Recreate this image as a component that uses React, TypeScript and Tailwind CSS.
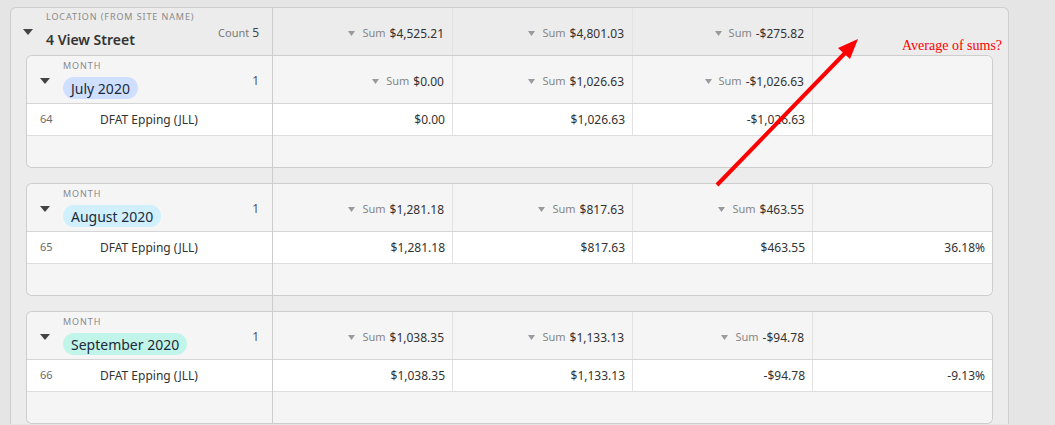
import React from 'react';

type Group = {
  month: string;
  pill: string;
  sums: [string, string, string];
  row: { id: string; name: string; values: [string, string, string, string] };
};

const groups: Group[] = [
  {
    month: 'July 2020',
    pill: 'bg-[#cfdfff]',
    sums: ['$0.00', '$1,026.63', '-$1,026.63'],
    row: { id: '64', name: 'DFAT Epping (JLL)', values: ['$0.00', '$1,026.63', '-$1,026.63', ''] },
  },
  {
    month: 'August 2020',
    pill: 'bg-[#d0f0fd]',
    sums: ['$1,281.18', '$817.63', '$463.55'],
    row: { id: '65', name: 'DFAT Epping (JLL)', values: ['$1,281.18', '$817.63', '$463.55', '36.18%'] },
  },
  {
    month: 'September 2020',
    pill: 'bg-[#c2f5e9]',
    sums: ['$1,038.35', '$1,133.13', '-$94.78'],
    row: { id: '66', name: 'DFAT Epping (JLL)', values: ['$1,038.35', '$1,133.13', '-$94.78', '-9.13%'] },
  },
];

const Caret = ({ className = '' }: { className?: string }) => (
  <svg width="10" height="6" viewBox="0 0 10 6" className={className}>
    <polygon points="0,0 10,0 5,6" fill="#444" />
  </svg>
);

const SmallCaret = () => (
  <svg width="7" height="5" viewBox="0 0 7 5" className="mr-[7px]">
    <polygon points="0,0 7,0 3.5,5" fill="#9a9a9a" />
  </svg>
);

const SumCell = ({ value, last = false }: { value?: string; last?: boolean }) => (
  <div
    className={`flex items-center justify-end pr-[8px] pt-[4px] ${
      last ? 'w-[179px]' : 'w-[180px] border-r border-[#e2e2e2]'
    }`}
  >
    {value && (
      <>
        <SmallCaret />
        <span className="text-[11px] text-[#858585] mr-[4px]">Sum</span>
        <span className="text-[12px] text-[#333]">{value}</span>
      </>
    )}
  </div>
);

const ValueCell = ({ value, last = false }: { value: string; last?: boolean }) => (
  <div
    className={`flex items-center justify-end pr-[7px] text-[12px] text-[#333] ${
      last ? 'w-[179px]' : 'w-[180px] border-r border-[#e2e2e2]'
    }`}
  >
    {value}
  </div>
);

export default function App() {
  return (
    <div className="relative w-[1055px] h-[425px] overflow-hidden bg-[#e5e5e5] pt-[7px] pl-[10px] font-['Noto_Sans',sans-serif]">
      <div className="flex w-[999px] bg-[#ececec] border border-b-0 border-[#cdcdcd] rounded-t-[6px]">
        {/* Left frozen pane */}
        <div className="w-[262px] border-r border-[#cdcdcd] flex flex-col">
          <div className="h-[47px] flex items-start pl-[12px] pr-[13px]">
            <Caret className="mt-[21px]" />
            <div className="ml-[13px] pt-[3px] flex-1">
              <div className="text-[9px] leading-[12px] tracking-[0.9px] text-[#8a8a8a]">
                LOCATION (FROM SITE NAME)
              </div>
              <div className="mt-[7px] text-[14px] leading-[20px] font-semibold text-[#333]">4 View Street</div>
            </div>
            <div className="mt-[16px] text-[11px] text-[#7a7a7a]">
              Count <span className="text-[12px] text-[#444]">5</span>
            </div>
          </div>

          {groups.map((g, i) => (
            <div
              key={g.month}
              className={`ml-[15px] border-l border-t border-b border-[#cdcdcd] rounded-l-[6px] overflow-hidden ${
                i > 0 ? 'mt-[15px]' : ''
              }`}
            >
              <div className="h-[48px] bg-[#f5f5f5] border-b border-[#d5d5d5] flex items-start pl-[13px] pr-[13px]">
                <Caret className="mt-[22px]" />
                <div className="ml-[13px] pt-[4px] flex-1">
                  <div className="text-[9px] leading-[12px] tracking-[0.9px] text-[#8a8a8a]">MONTH</div>
                  <div
                    className={`mt-[5px] inline-flex items-center h-[22px] px-[8px] rounded-full text-[14px] text-[#1d2a3a] ${g.pill}`}
                  >
                    {g.month}
                  </div>
                </div>
                <div className="mt-[16px] text-[12px] text-[#555]">1</div>
              </div>
              <div className="h-[32px] bg-white border-b border-[#dedede] flex items-center">
                <div className="w-[73px] pl-[13px] text-[11px] text-[#6b6b6b]">{g.row.id}</div>
                <div className="text-[12px] text-[#333]">{g.row.name}</div>
              </div>
              <div className="h-[31px] bg-[#f5f5f5]" />
            </div>
          ))}
        </div>

        {/* Right scrolling pane */}
        <div className="flex-1 flex flex-col pr-[15px]">
          <div className="h-[47px] flex">
            <SumCell value="$4,525.21" />
            <SumCell value="$4,801.03" />
            <SumCell value="-$275.82" />
            <SumCell last />
          </div>

          {groups.map((g, i) => (
            <div
              key={g.month}
              className={`border-r border-t border-b border-[#cdcdcd] rounded-r-[6px] overflow-hidden ${
                i > 0 ? 'mt-[15px]' : ''
              }`}
            >
              <div className="h-[48px] bg-[#f5f5f5] border-b border-[#d5d5d5] flex">
                <SumCell value={g.sums[0]} />
                <SumCell value={g.sums[1]} />
                <SumCell value={g.sums[2]} />
                <SumCell last />
              </div>
              <div className="h-[32px] bg-white border-b border-[#dedede] flex">
                <ValueCell value={g.row.values[0]} />
                <ValueCell value={g.row.values[1]} />
                <ValueCell value={g.row.values[2]} />
                <ValueCell value={g.row.values[3]} last />
              </div>
              <div className="h-[31px] bg-[#f5f5f5]" />
            </div>
          ))}
        </div>
      </div>

      {/* annotation */}
      <div className="absolute left-[902px] top-[38px] text-[14px] leading-[16px] text-[#ff0000] font-['Liberation_Serif',serif]">
        Average of sums?
      </div>
      <svg className="absolute left-0 top-0 pointer-events-none" width="1055" height="425">
        <line x1="717" y1="185" x2="847" y2="51" stroke="#ff0000" strokeWidth="4" />
        <polygon points="858,39 838,48 850,59" fill="#ff0000" />
      </svg>
    </div>
  );
}
